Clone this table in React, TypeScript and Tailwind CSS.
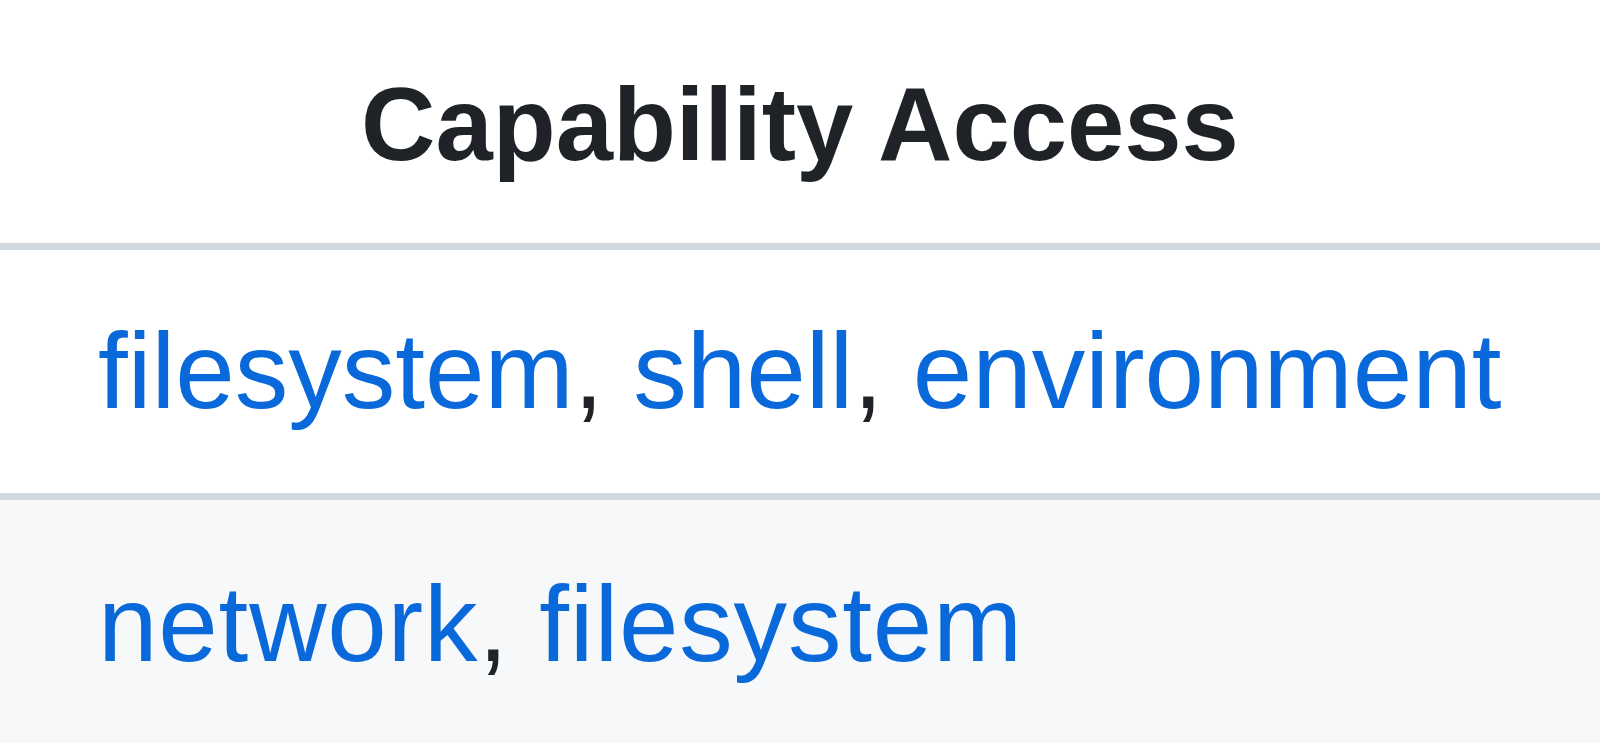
import React from 'react';

const rows: string[][] = [
  ['filesystem', 'shell', 'environment'],
  ['network', 'filesystem'],
];

export default function App() {
  return (
    <div className="w-[1600px] h-[743px] overflow-hidden bg-white font-['Liberation_Sans',Arial,sans-serif] text-[#1f2328]">
      <table className="w-full border-collapse">
        <thead>
          <tr>
            <th className="pt-[45px] pb-[38px] text-center text-[103px] leading-[160px] font-bold border-b-[7px] border-[#d1d9e0]">
              Capability Access
            </th>
          </tr>
        </thead>
        <tbody>
          {rows.map((caps, i) => (
            <tr key={i} className={i % 2 === 1 ? 'bg-[#f6f8fa]' : 'bg-white'}>
              <td
                className={`pl-[98px] text-left text-[107px] leading-[160px] whitespace-nowrap ${
                  i === 0
                    ? 'pt-[41px] pb-[42px] border-b-[7px] border-[#d1d9e0]'
                    : 'pt-[44px] pb-[39px] tracking-[0.8px]'
                }`}
              >
                {caps.map((c, j) => (
                  <React.Fragment key={c}>
                    <a href="#" className="text-[#0969da] no-underline">
                      {c}
                    </a>
                    {j < caps.length - 1 && <span>, </span>}
                  </React.Fragment>
                ))}
              </td>
            </tr>
          ))}
        </tbody>
      </table>
    </div>
  );
}
